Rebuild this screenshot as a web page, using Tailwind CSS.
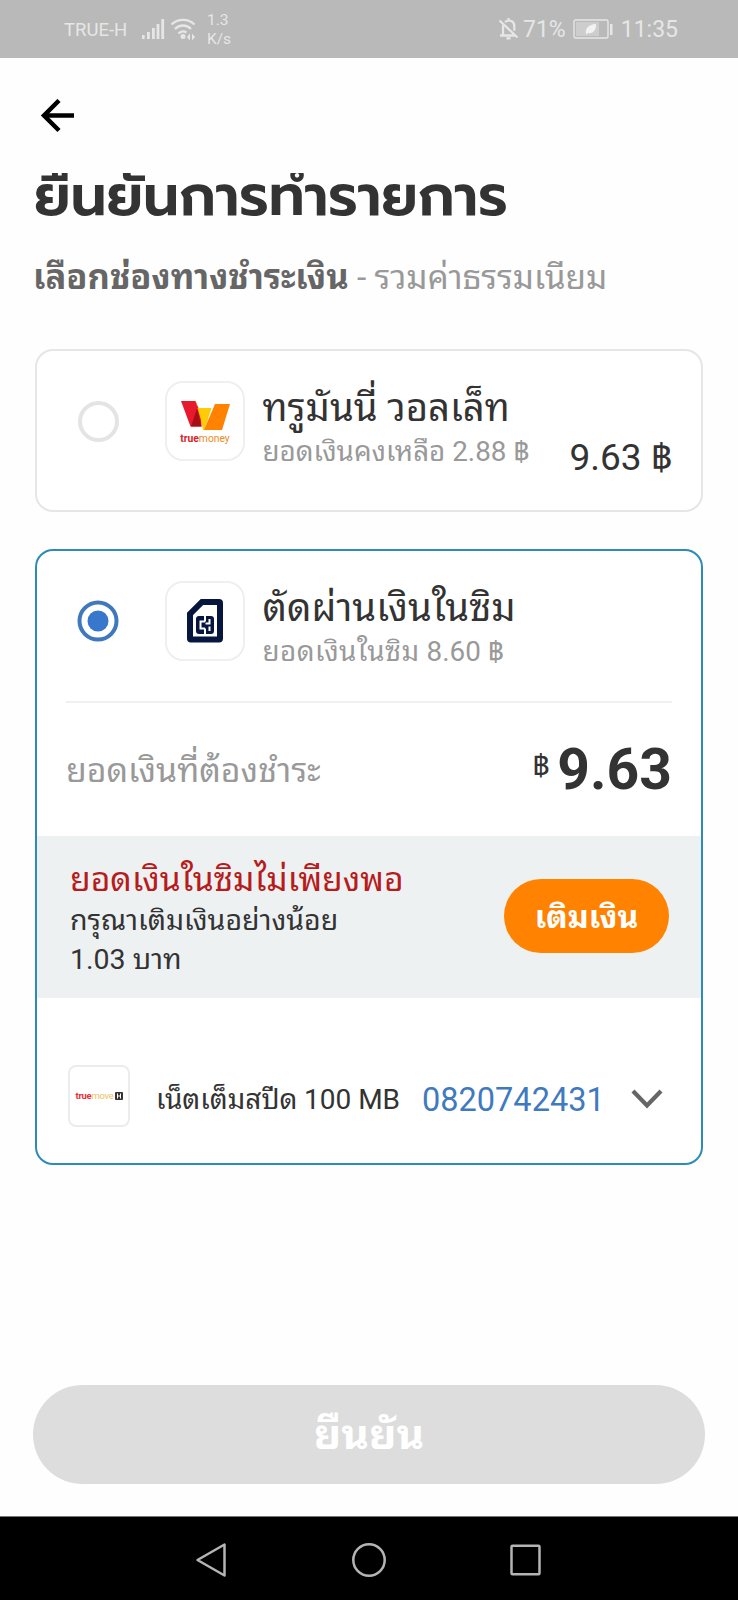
<!DOCTYPE html>
<html lang="th">
<head>
<meta charset="utf-8">
<title>ยืนยันการทำรายการ</title>
<script src="https://cdn.jsdelivr.net/npm/@tailwindcss/browser@4"></script>
</head>
<body class="bg-white">
<div class="w-[738px] h-[1600px] overflow-hidden flex flex-col bg-[#fefefe] font-['Roboto','Noto_Sans_Thai_Looped','Noto_Sans_Thai','Noto_Sans',sans-serif] text-[#333333] whitespace-nowrap">
  <header class="h-[58px] bg-[#b9b9b9] text-[#e6e6e6] flex items-center pl-[64px] pr-[60px] shrink-0">
    <span class="text-[18.5px] w-[77px] pt-[3px]">TRUE-H</span>
    <svg class="w-[24px] h-[24px]" viewBox="0 0 24 24" fill="currentColor"><rect x="1" y="18" width="2.6" height="4"/><rect x="6" y="15" width="2.8" height="7"/><rect x="11" y="11" width="2.8" height="11"/><rect x="15.600" y="7" width="2.800" height="15"/><rect x="20.300" y="2" width="2.800" height="20"/></svg>
    <svg class="w-[26px] h-[24px] ml-[5px]" viewBox="0 0 26 24" fill="none" stroke="currentColor" stroke-width="2.400"><path d="M1.500 7.500a16.500 16.500 0 0 1 23 0M5 12a11 11 0 0 1 16 0M8.500 16.500a6.500 6.500 0 0 1 8-1"/><circle cx="13" cy="19.500" r="2.500" fill="currentColor" stroke="none"/><path d="M20 16.500l-3 3.500 3 3.500zM22 16.500l3 3.500-3 3.500z" fill="currentColor" stroke="none"/></svg>
    <span class="ml-[11px] text-[15.5px] leading-[19px] pt-[2px]">1.3<br>K/s</span>
    <div class="ml-auto flex items-center">
      <svg class="w-[22px] h-[24px]" viewBox="0 0 22 24" fill="none" stroke="currentColor" stroke-width="2.300"><path d="M1.500 3.500l18 17M2 18.500h15M5 18v-8c0-1 .2-2 .8-3M7 5c1.500-1.200 2.600-1.300 4-1.300 3.500 0 5.300 2.500 5.300 6v4M10.500 1v3"/><path d="M8.500 21.300h4" stroke-width="2.400"/></svg>
      <span class="ml-[3px] pt-[3px] text-[23px]">71%</span>
      <svg class="w-[41px] h-[20px] ml-[7px]" viewBox="0 0 41 20"><rect x="1" y="1" width="34" height="18" rx="1.500" fill="none" stroke="currentColor" stroke-width="1.400"/><rect x="3" y="3" width="23" height="14" fill="#cdcdcd"/><path d="M13 15c-1-6 3-9.500 10-10 .5 6-3 10-8 9l-1.500 1.500z" fill="#f2f2f2"/><rect x="37" y="5" width="2.500" height="11" fill="currentColor"/></svg>
      <span class="ml-[7px] pt-[3px] text-[23px]">11:35</span>
    </div>
  </header>

  <main class="flex-1 flex flex-col px-[35px]">
    <svg class="w-[34px] h-[34px] mt-[41px] ml-[5px]" viewBox="0 0 34 34" fill="none" stroke="#000" stroke-width="4.500"><path d="M34 16.500H4"/><path d="M19 1.500L4 16.500l15 15"/></svg>
    <h1 class="mt-[40px] -ml-[1px] h-[60px] overflow-hidden text-[56.5px] leading-[46px] font-semibold font-['Prompt','Kanit','Noto_Sans_Thai',sans-serif]">ยืนยันการทำรายการ</h1>
    <p class="h-[50px] mt-[20px] -ml-[2px] text-[33.4px] leading-[49px] text-[#999999]"><b class="text-[34.5px] text-[#666666]">เลือกช่องทางชำระเงิน</b> - รวมค่าธรรมเนียม</p>

    <section class="mt-[46px] h-[163px] border-2 border-[#e6e6e6] rounded-[18px] flex items-start bg-white">
      <div class="mt-[50px] ml-[41px] size-[41px] rounded-full border-4 border-[#e4e4e4]"></div>
      <div class="mt-[30px] ml-[46px] size-[80px] rounded-[18px] border-2 border-[#efefef] flex flex-col items-center">
        <svg class="w-[50px] h-[30px] mt-[18px] ml-[2px]" viewBox="0 0 50 30"><path d="M0 0h14.500l6 14v11.500H9.500z" fill="#e8192c"/><path d="M14.500 0h.5l1.500 7h14l-7 22H22l-2-10z" fill="#ffcb05"/><path d="M16 7.500L20.500 25.500H10z" fill="#a50f14"/><path d="M34 3h15l-8 26H23z" fill="#ff8200"/></svg>
        <span class="mt-[1px] text-[10.3px] leading-[14px] text-[#f08a24]"><b class="text-[#d8232a]">true</b>money</span>
      </div>
      <div class="ml-[17.5px] mt-[35px]">
        <div class="text-[38.3px] leading-[44px]">ทรูมันนี่ วอลเล็ท</div>
        <div class="mt-[2px] text-[27.8px] leading-[40px] text-[#999999]">ยอดเงินคงเหลือ 2.88 ฿</div>
      </div>
      <div class="ml-auto mr-[29px] mt-[85px] text-[37px] leading-[44px]">9.63 ฿</div>
    </section>

    <section class="mt-[37px] h-[616px] border-2 border-[#2d8bba] rounded-[18px] bg-white flex flex-col">
      <div class="flex items-start h-[152px] border-b-2 border-[#f0f0f0] mx-[29px]">
        <svg class="size-[42px] mt-[49px] ml-[11px]" viewBox="0 0 42 42"><circle cx="21" cy="21" r="18.500" fill="none" stroke="#4078bd" stroke-width="4"/><circle cx="21" cy="21" r="10.500" fill="#3878cc"/></svg>
        <div class="mt-[30px] ml-[46px] size-[80px] rounded-[18px] border-2 border-[#efefef] flex items-center justify-center"><svg class="w-[36px] h-[44px]" viewBox="0 0 36 44"><path d="M15 3h17q1 0 1 1v35.500q0 1-1 1H4q-1 0-1-1V15z" fill="none" stroke="#06163f" stroke-width="6"/><rect x="9" y="17" width="18" height="18" rx="3" fill="#06163f"/><path d="M18 17v5.500M18 29.500V35M18 22.500h-4.500v7H18M22.500 20v4.500h-4M22.500 32v-4.500" fill="none" stroke="#fff" stroke-width="2"/></svg></div>
        <div class="ml-[17.5px] mt-[35px]">
          <div class="text-[38.3px] leading-[44px]">ตัดผ่านเงินในซิม</div>
          <div class="mt-[2px] text-[27.8px] leading-[40px] text-[#999999]"><span class="tracking-[0.5px]">ยอดเงินในซิม</span> 8.60 ฿</div>
        </div>
      </div>
      <div class="flex h-[133px] px-[29px]">
        <div class="mt-[40px] text-[33.8px] leading-[56px] text-[#999999]">ยอดเงินที่ต้องชำระ</div>
        <div class="ml-auto flex"><span class="text-[30px] leading-[40px] mt-[43px] mr-[8px]">฿</span><span class="text-[57px] leading-[60px] font-bold mt-[37px]">9.63</span></div>
      </div>
      <div class="flex h-[162px] bg-[#eef1f2] pl-[33px] pr-[32px]">
        <div class="mt-[22px]"><div class="text-[33.7px] leading-[44px] text-[#b71c1c]">ยอดเงินในซิมไม่เพียงพอ</div><div class="text-[28.5px] leading-[38.500px]">กรุณาเติมเงินอย่างน้อย<br>1.03 บาท</div></div>
        <div class="ml-auto mt-[43px] w-[165px] h-[74px] rounded-full bg-[#ff8200] text-white text-[32px] leading-[77px] text-center font-bold">เติมเงิน</div>
      </div>
      <div class="flex items-center pt-[67px] pl-[31px]">
        <div class="size-[62px] border-2 border-[#ececec] rounded-[8px] flex items-center justify-center text-[9.5px] tracking-[-0.3px] leading-[12px] text-[#f0c060]"><b class="text-[#e8303a]">true</b>move<svg class="size-[8px] ml-[1px]" viewBox="0 0 8 8"><rect width="8" height="8" rx="1" fill="#333"/><path d="M2.500 1.500v5M5.500 1.500v5M2.500 4h3" stroke="#fff" fill="none"/></svg></div>
        <span class="ml-[26px] w-[148px] pt-[8px] text-[28px] leading-[40px]">เน็ตเต็มสปีด</span><span class="pt-[8px] text-[28px] leading-[40px]">100 MB</span><span class="ml-[22px] pt-[8px] text-[32.5px] leading-[40px] text-[#3f7abf]">0820742431</span>
        <svg class="w-[32px] h-[20px] ml-[26px] mt-[6px]" viewBox="0 0 32 20" fill="none" stroke="#666" stroke-width="4.200"><path d="M2 2l14 14.500L30 2"/></svg>
      </div>
    </section>
    <button class="mt-[220px] -mx-[2px] h-[99px] shrink-0 rounded-full bg-[#dddddd] text-white text-[42.500px] leading-[99px] font-bold">ยืนยัน</button>
  </main>
  <nav class="h-[84px] shrink-0 bg-black border-t border-[#777] flex items-center justify-center gap-[124px] pt-[2px]">
    <svg class="size-[34px]" viewBox="0 0 34 34" fill="none" stroke="#b4b4b4" stroke-width="2.500" stroke-linejoin="round"><path d="M30.500 1.500v31L3.500 17z"/></svg>
    <svg class="size-[34px]" viewBox="0 0 34 34" fill="none" stroke="#b4b4b4" stroke-width="2.500"><circle cx="17" cy="17" r="15.700"/></svg>
    <svg class="size-[34px]" viewBox="0 0 34 34" fill="none" stroke="#b4b4b4" stroke-width="2.500"><rect x="1.500" y="2.800" width="28" height="28.500" rx="1"/></svg>
  </nav>
</div>
</body>
</html>
